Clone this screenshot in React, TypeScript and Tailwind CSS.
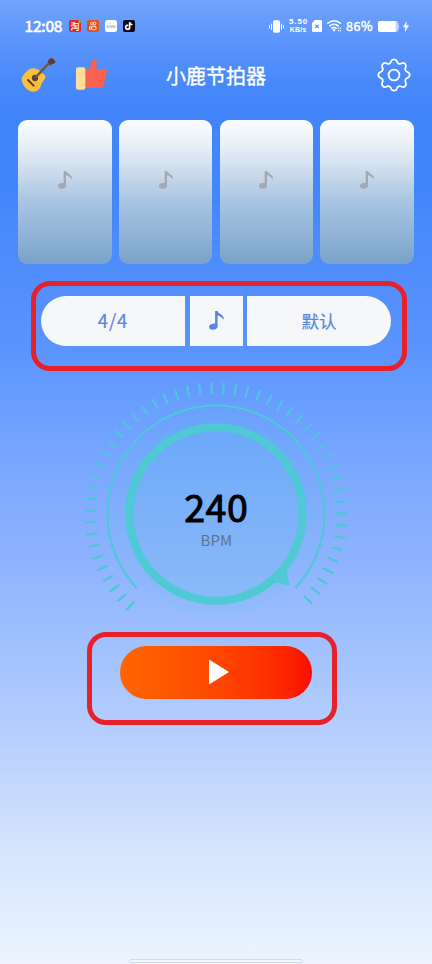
import { Fragment } from 'react'

const CX = 136
const CY = 136

// 51 ticks spread over 270 degrees
const ticks = Array.from({ length: 51 }, (_, i) => -137 + i * 5.4)

const polar = (deg: number, r: number, c = 0) => {
    const a = (deg * Math.PI) / 180
    return `${(c + r * Math.sin(a)).toFixed(2)} ${(c - r * Math.cos(a)).toFixed(2)}`
}

const gearPath = Array.from({ length: 8 }, (_, i) => {
    const a = i * 45
    return `${i === 0 ? 'M' + polar(-12, 14, 18) : ''} A3.1 3.1 0 0 1 ${polar(a + 12, 14, 18)} A3 3 0 0 0 ${polar(a + 33, 14, 18)}`
}).join(' ') + ' Z'

function Note({ className }: { className: string }) {
    return (
        <svg viewBox="0 0 42 54" className={className} fill="currentColor">
            <ellipse cx="12" cy="44.5" rx="12" ry="8.5" transform="rotate(-8 12 44.5)" />
            <path d="M17 0h7l2 4 7 5q9 6 9 11l-2 5-3-5q-4-5-13-8v32h-7z" />
        </svg>
    )
}

function StatusBar() {
    return (
        <div className="h-[52px] flex items-start justify-between pl-[24.5px] pr-[23px] text-white">
            <div className="flex items-center h-[52px]">
                <span className="w-[38.5px] pb-px text-[15.5px] leading-none [-webkit-text-stroke:0.6px_white] tracking-[-0.2px] whitespace-nowrap">12:08</span>
                <div className="flex items-center gap-[6px] ml-[6px]">
                    <span className="relative size-3 rounded-[2px] bg-[#e6203d] flex items-center justify-center text-[9px] leading-none font-bold text-[#ffe9b0]">
                        淘
                        <i className="absolute top-0 right-0 size-[3px] rounded-full bg-[#55c73b]" />
                    </span>
                    <svg className="size-3" viewBox="0 0 36 36">
                        <rect width="36" height="36" rx="6" fill="#e95118" />
                        <g fill="none" stroke="#fff" strokeWidth="2.6">
                            <circle cx="14" cy="11" r="3.4" />
                            <circle cx="22.5" cy="10.500" r="4.2" />
                            <rect x="14" y="19" width="13" height="10" rx="2.5" />
                            <path d="M14 22l-6-2v8l6-2" />
                        </g>
                    </svg>
                    <span className="size-3 rounded-[2.5px] bg-white flex items-center justify-center text-[4.5px] leading-none font-bold text-[#8daadb]">vivo</span>
                    <svg className="size-3" viewBox="0 0 36 36">
                        <rect width="36" height="36" rx="6" fill="#070914" />
                        <g fill="none" strokeWidth="3.6">
                            <path d="M16 16c-5-1-8 2-8 6s3 6 6 6 6-2 6-6V7c1 4 4 7 8 7" stroke="#38d7dc" transform="translate(-1 -1)" />
                            <path d="M16 16c-5-1-8 2-8 6s3 6 6 6 6-2 6-6V7c1 4 4 7 8 7" stroke="#e84b72" transform="translate(1 1)" />
                            <path d="M16 16c-5-1-8 2-8 6s3 6 6 6 6-2 6-6V7c1 4 4 7 8 7" stroke="#fff" />
                        </g>
                    </svg>
                </div>
            </div>
            <div className="flex items-center h-[52px]">
                <svg className="w-[15px] h-[13px]" viewBox="0 0 45 39" fill="#fff">
                    <rect x="12" y="1" width="21" height="37" rx="5" />
                    <rect x="6" y="11" width="3" height="18" />
                    <rect x="36" y="11" width="3" height="18" />
                    <rect x="0" y="15" width="3" height="10" />
                    <rect x="42" y="15" width="3" height="10" />
                </svg>
                <div className="w-[20px] ml-1 flex flex-col items-center font-['Liberation_Sans',sans-serif] text-[8px] leading-[8px] font-bold whitespace-nowrap">
                    <span className="text-[8px] tracking-[0.9px] pl-px">5.50</span>
                    <span className="text-[7px] tracking-[0.2px]">KB/s</span>
                </div>
                <svg className="w-[10px] h-3 ml-[4px]" viewBox="0 0 30 36">
                    <path d="M9 0h17q4 0 4 4v28q0 4-4 4H4q-4 0-4-4V9z" fill="#fff" />
                    <path d="M10 14l10 10M20 14L10 24" stroke="#5b90f5" strokeWidth="3.5" />
                </svg>
                <svg className="w-[15px] h-3 ml-[5px]" viewBox="0 0 45 36" fill="none" stroke="#fff" strokeWidth="4.500">
                    <path d="M1 11Q21-6 42 11M7 19q14-12 28 0M13 26q8-7 16 0" />
                    <path d="M16 29q5-4 10 0l-5 6z" fill="#fff" stroke="none" />
                    <path d="M34 23v4M40 23v4M34 30v4M40 30v4" strokeWidth="3" />
                </svg>
                <span className="w-[27px] ml-[4px] text-[12.5px] leading-none [-webkit-text-stroke:0.45px_white] tracking-[0.6px] whitespace-nowrap">86%</span>
                <svg className="w-[21px] h-[11px] ml-[5px]" viewBox="0 0 63 33">
                    <rect width="61" height="33" rx="8" fill="#bdd3ff" />
                    <path d="M7 0h46v33H7q-7 0-7-7V7q0-7 7-7z" fill="#fff" />
                    <rect x="60" y="11" width="3" height="11" fill="#bdd3ff" />
                </svg>
                <svg className="w-[6px] h-[11px] ml-[4px]" viewBox="0 0 18 33" fill="#fff">
                    <path d="M11 0L0 19h7L6 33l12-20h-8z" />
                </svg>
            </div>
        </div>
    )
}

function Header() {
    return (
        <header className="h-[68px] grid grid-cols-[120px_1fr_120px] pt-[5px] px-[21px]">
            <div className="flex">
                <svg className="w-[35px] h-[36px]" viewBox="62 170 105 108">
                    <path d="M80 212C90 202 100 202 112 207C120 210 121 217 128 220C137 224 136 231 132 238C128 244 124 247 122 254C120 266 110 275 97 274C79 271 66 254 64 238C64 227 73 220 80 212Z" fill="#fac03c" />
                    <circle cx="104" cy="233" r="9.500" fill="#5a3d37" />
                    <path d="M106 231L148 186" stroke="#7a5346" strokeWidth="7" />
                    <path d="M142 182l9-9 8 2 7 9-5 6-6 1-5 6z" fill="#5a3d37" />
                    <path d="M83 239l17 17" stroke="#5a3d37" strokeWidth="6" strokeLinecap="round" />
                </svg>
                <svg className="w-[33px] h-[33px] ml-[19px] mt-[1px]" viewBox="225 174 99 99">
                    <path d="M254 209h9q7-2 9-13l2-12c3-9 15-8 16 1 1 8-2 15-1 22h25q8 0 7 7l-10 43q-2 7-9 7h-48z" fill="#fb6150" />
                    <rect x="228" y="202" width="28" height="67" rx="6" fill="#ffdf9a" />
                </svg>
            </div>
            <h1 className="text-center text-white text-[20px] leading-[37px] font-normal [-webkit-text-stroke:0.35px_white] whitespace-nowrap">小鹿节拍器</h1>
            <svg className="w-9 h-9 justify-self-end -mr-[0.5px]" viewBox="0 0 36 36" fill="none" stroke="#fff" strokeWidth="1.8">
                <path d={gearPath} />
                <circle cx="18" cy="18" r="5.4" />
            </svg>
        </header>
    )
}

function Dial() {
    return (
        <div className="relative mt-[6.5px] ml-[80.3px] w-[272px] h-[254px]">
            <svg className="w-[272px] h-[254px]" viewBox="0 0 272 254" fill="none">
                <defs>
                    <linearGradient id="tick" x1="0" y1="0" x2="0" y2="254" gradientUnits="userSpaceOnUse">
                        <stop stopColor="#52c5dd" />
                        <stop offset="1" stopColor="#47c8cd" />
                    </linearGradient>
                    <radialGradient id="glow">
                        <stop offset="0.8" stopColor="#54c5de" stopOpacity="0.18" />
                        <stop offset="1" stopColor="#54c5de" stopOpacity="0" />
                    </radialGradient>
                </defs>
                <circle cx={CX} cy={CY} r="108" fill="url(#glow)" />
                {ticks.map((deg) => (
                    <path key={deg} d={`M${polar(deg, 120, CX)} L${polar(deg, 131.5, CX)}`} stroke="url(#tick)" strokeWidth="2.1" />
                ))}
                <path d={`M${polar(-133, 108.5, CX)} A108.5 108.5 0 1 1 ${polar(133, 108.5, CX)}`} stroke="#4ec7d6" strokeWidth="2.2" />
                <circle cx={CX} cy={CY} r="86.700" stroke="#4fc9d3" strokeWidth="8" />
                <path d="M202 187L206 191L209.500 207.500L190 203z" fill="#4fc9d3" />
            </svg>
            <div className="absolute inset-x-0 top-[103px] text-center">
                <div className="text-[37.5px] leading-[50px] font-normal tracking-[0.6px] [-webkit-text-stroke:1px_black] text-black">240</div>
                <div className="mt-[2px] text-[15px] leading-[14px] text-[#63738b]">BPM</div>
            </div>
        </div>
    )
}

export default function App() {
    return (
        <main className="w-[432px] h-[964px] overflow-hidden flex flex-col font-['Noto_Sans_CJK_SC',sans-serif] bg-[linear-gradient(180deg,#70a3fd_0px,#5e96fc_35px,#4788fa_85px,#4285fa_120px,#4386fb_190px,#518efc_280px,#5a94fe_350px,#6b9fff_410px,#7da9ff_480px,#90b4fe_570px,#a0c1fd_645px,#b9d0fe_745px,#d5e4fd_845px,#e4effe_925px,#edf4ff_964px)]">
            <StatusBar />
            <Header />
            <section className="grid grid-cols-4 gap-[7.3px] px-[18px]">
                {[1, 2, 3, 4].map((beat) => (
                    <div key={beat} className="h-36 rounded-[9px] flex justify-center pt-[51px] text-[#a5a9af] bg-[linear-gradient(180deg,#fcfdff_0%,#e5edf5_20%,#c5d7ea_40%,#a6c3e2_58%,#92b4d7_78%,#79a2ca_100%)]">
                        <Note className="w-[14px] h-[18px]" />
                    </div>
                ))}
            </section>
            <section className="mt-[17px] ml-[31px] w-[376px] h-[90px] border-5 border-[#e8202a] rounded-[19px] pt-[9.5px] pl-[5px]">
                <div className="w-[350px] h-[50.5px] flex gap-[4.500px] text-[#5b85e3]">
                    {['4/4', '默认'].map((label, i) => (
                        <Fragment key={label}>
                            {i === 1 && (
                                <button className="w-[53px] bg-[#f6f7f9] flex items-center justify-center">
                                    <Note className="w-[15px] h-[19px]" />
                                </button>
                            )}
                            <button className={`w-[144px] bg-[#f6f7f9] [-webkit-text-stroke:0.2px_#5b85e3] ${i === 0 ? 'rounded-l-full text-[18.5px] tracking-[0.9px]' : 'rounded-r-full text-[17.5px]'}`}>
                                {label}
                            </button>
                        </Fragment>
                    ))}
                </div>
            </section>
            <Dial />
            <section className="ml-[87px] w-[250px] h-[93px] shrink-0 border-5 border-[#e8202a] rounded-[19px] pt-[9px] pl-[28px]">
                <button className="w-48 h-[53px] rounded-full bg-linear-to-r from-[#ff6500] to-[#fc0900] flex items-center justify-center">
                    <svg className="w-5 h-[26px] ml-[5px]" viewBox="0 0 20 26" fill="#fff">
                        <path d="M0 0.500L20 13L0 25.500z" />
                    </svg>
                </button>
            </section>
            <div className="mt-auto mb-px mx-auto w-[174px] h-1 rounded-full border border-[#cddbea] bg-[#f0f8ff]" />
        </main>
    )
}
